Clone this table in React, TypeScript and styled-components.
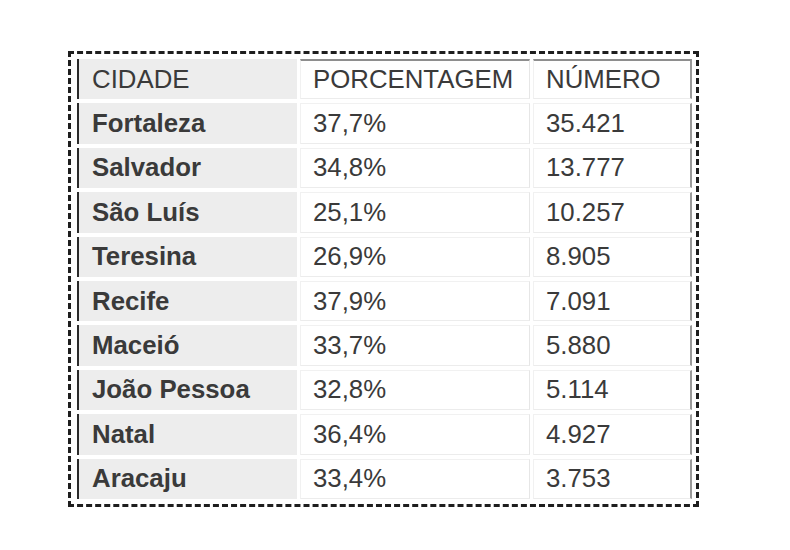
import React from "react";
import styled, { createGlobalStyle } from "styled-components";

const GlobalStyle = createGlobalStyle`
  html, body {
    margin: 0;
    padding: 0;
    background: #ffffff;
  }
  body {
    font-family: "Liberation Sans", Arial, sans-serif;
  }
`;

const Page = styled.div`
  padding: 51px 0 0 68px;
`;

const Frame = styled.div`
  display: inline-block;
  border: 3px dashed #1e1e1e;
  padding: 1px 1px 1px 3px;
`;

const Table = styled.table`
  border-collapse: separate;
  border-spacing: 3px 4px;
  font-family: "Liberation Sans", Arial, sans-serif;
  font-size: 25.8px;
  color: #3a3a3a;
`;

const Cell = styled.td<{ $col: number; $head?: boolean }>`
  box-sizing: border-box;
  height: 40.4px;
  padding: 0 0 0 ${(p) => (p.$col === 0 ? 13 : 12)}px;
  text-align: left;
  vertical-align: middle;
  white-space: nowrap;
  font-weight: ${(p) => (p.$col === 0 && !p.$head ? 700 : 400)};
  width: ${(p) => (p.$col === 0 ? 220 : p.$col === 1 ? 230 : 159)}px;
  background: ${(p) => (p.$col === 0 ? "#ededed" : "#ffffff")};
  border-left: ${(p) => (p.$col === 0 ? "2px solid #2a2a2a" : "1px solid #f1f1f1")};
  border-top: ${(p) =>
    p.$col === 0 ? "none" : p.$head ? "2px solid #8e8e8e" : "1px solid #f1f1f1"};
  border-bottom: ${(p) => (p.$col === 0 ? "none" : "1px solid #ececec")};
  border-right: ${(p) =>
    p.$col === 2 ? "2px solid #9a9a9a" : p.$col === 1 ? "1px solid #e6e6e6" : "none"};
`;

const rows: [string, string, string][] = [
  ["Fortaleza", "37,7%", "35.421"],
  ["Salvador", "34,8%", "13.777"],
  ["São Luís", "25,1%", "10.257"],
  ["Teresina", "26,9%", "8.905"],
  ["Recife", "37,9%", "7.091"],
  ["Maceió", "33,7%", "5.880"],
  ["João Pessoa", "32,8%", "5.114"],
  ["Natal", "36,4%", "4.927"],
  ["Aracaju", "33,4%", "3.753"],
];

export default function App() {
  return (
    <>
      <GlobalStyle />
      <Page>
        <Frame>
          <Table>
            <thead>
              <tr>
                <Cell as="th" $col={0} $head>CIDADE</Cell>
                <Cell as="th" $col={1} $head>PORCENTAGEM</Cell>
                <Cell as="th" $col={2} $head>NÚMERO</Cell>
              </tr>
            </thead>
            <tbody>
              {rows.map((r) => (
                <tr key={r[0]}>
                  <Cell $col={0}>{r[0]}</Cell>
                  <Cell $col={1}>{r[1]}</Cell>
                  <Cell $col={2}>{r[2]}</Cell>
                </tr>
              ))}
            </tbody>
          </Table>
        </Frame>
      </Page>
    </>
  );
}
